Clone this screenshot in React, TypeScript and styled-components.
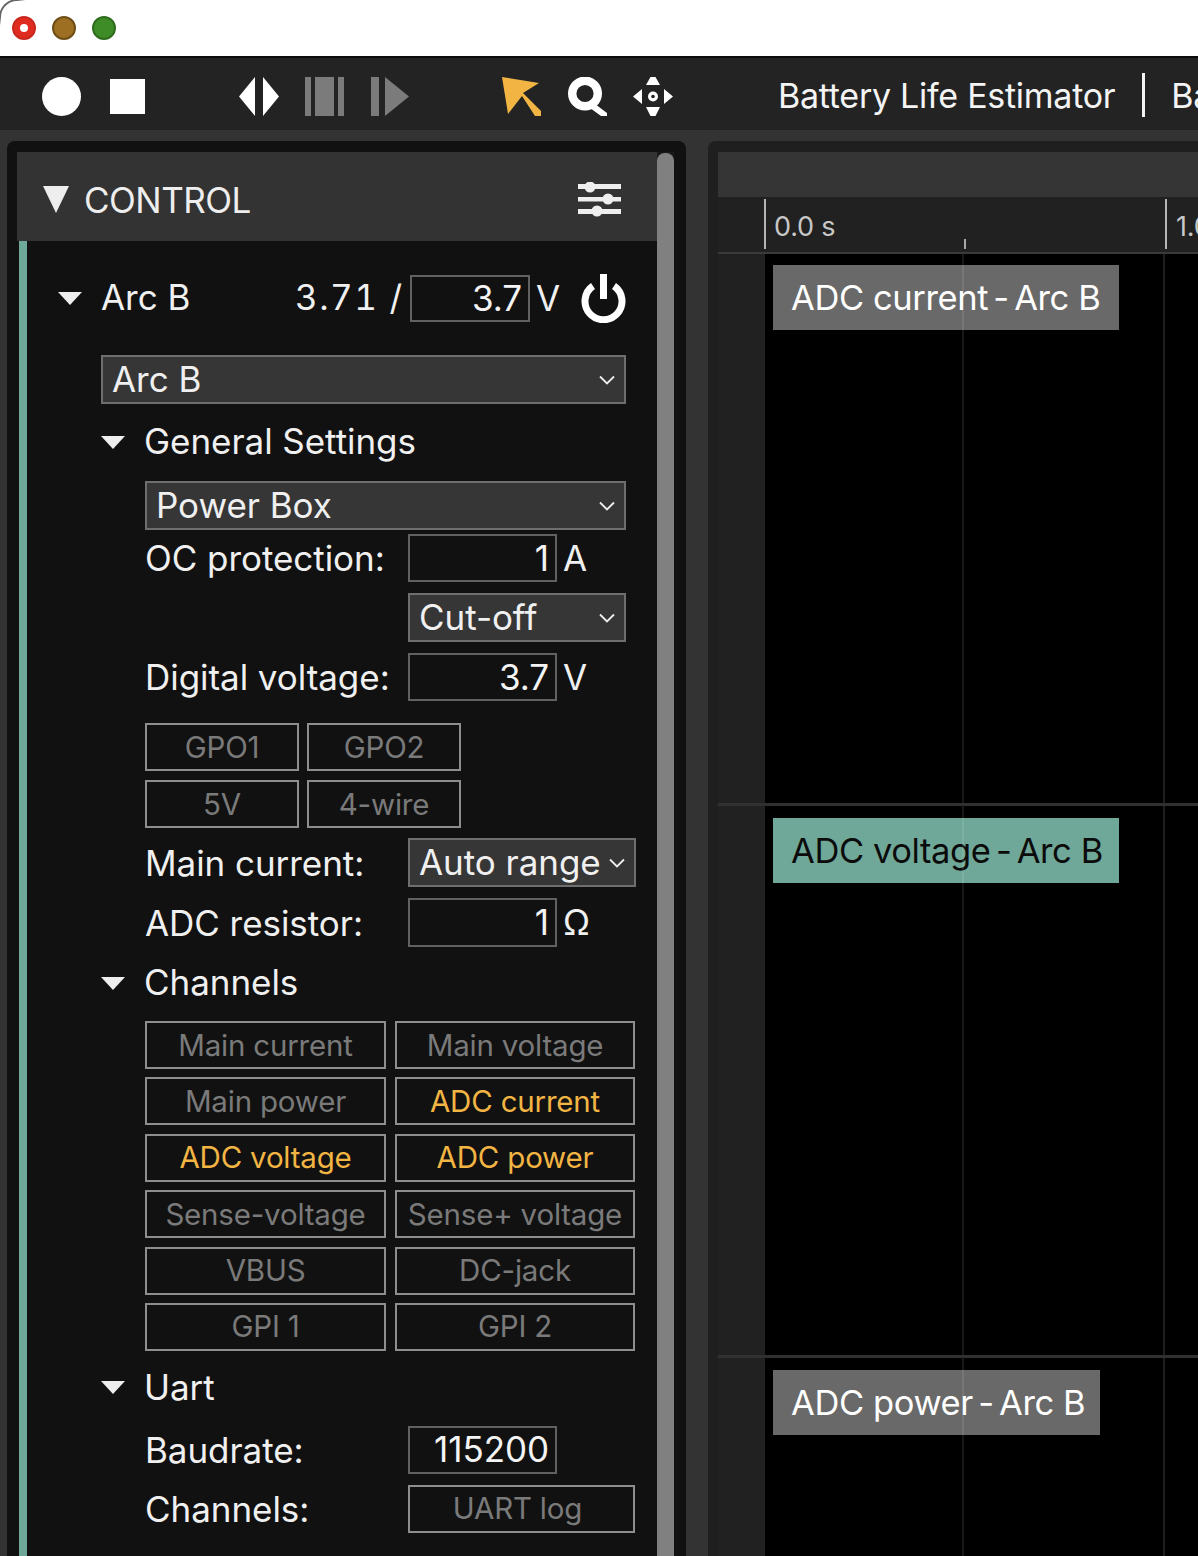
import React from "react";
import styled, { createGlobalStyle } from "styled-components";

const Global = createGlobalStyle`
  html, body { margin: 0; padding: 0; background: #333; }
  body { width: 1198px; height: 1556px; overflow: hidden; font-family: Inter, Roboto, "Liberation Sans", sans-serif; }
  * { box-sizing: border-box; }
`;

const Page = styled.div`
  width: 1198px;
  height: 1556px;
  display: flex;
  flex-direction: column;
  overflow: hidden;
  background: #333;
`;

const TitleBar = styled.div`
  height: 58px;
  flex: none;
  background: #fff;
  border-bottom: 2px solid #0c0c0c;
  position: relative;
  display: flex;
  align-items: center;
  gap: 16px;
  padding: 0 0 0 12px;
  &::before {
    content: "";
    position: absolute;
    left: -1px;
    top: -1px;
    width: 26px;
    height: 26px;
    border-top-left-radius: 18px;
    border-top: 2px solid #666;
    border-left: 2px solid #666;
    mask-image: linear-gradient(135deg, #000 35%, transparent 50%);
  }
`;

const Light = styled.span<{ $fill: string; $edge: string }>`
  width: 24px;
  height: 24px;
  border-radius: 50%;
  background: ${(p) => p.$fill};
  border: 2px solid ${(p) => p.$edge};
  display: flex;
  align-items: center;
  justify-content: center;
`;

const LightDot = styled.span`
  width: 8px;
  height: 8px;
  border-radius: 50%;
  background: #fff;
`;

const Toolbar = styled.div`
  height: 72px;
  flex: none;
  background: #232323;
  display: flex;
  align-items: center;
  padding-left: 42px;
  padding-top: 4px;
  white-space: nowrap;
  overflow: hidden;
`;

const ToolIcon = styled.svg<{ $ml: number }>`
  flex: none;
  margin-left: ${(p) => p.$ml}px;
  display: block;
`;

const ToolTitle = styled.span<{ $ml: number }>`
  margin-left: ${(p) => p.$ml}px;
  margin-top: -1px;
  font-size: 34px;
  letter-spacing: -0.27px;
  color: #f4f4f4;
  flex: none;
`;

const ToolDivider = styled.span`
  width: 3px;
  height: 44px;
  margin-left: 27px;
  margin-top: -3px;
  background: #f4f4f4;
  flex: none;
`;

const Main = styled.div`
  flex: 1;
  min-height: 0;
  display: flex;
  gap: 22px;
  padding: 11px 0 0 7px;
`;

const LeftFrame = styled.div`
  width: 679px;
  flex: none;
  background: #111;
  border-radius: 8px 8px 0 0;
  padding: 11px 12px 0 10px;
  display: flex;
`;

const LeftBody = styled.div`
  flex: 1;
  min-width: 0;
  display: flex;
  flex-direction: column;
`;

const Scrollbar = styled.div`
  width: 17px;
  flex: none;
  background: #1a1a1a;
  padding-top: 1px;
`;

const ScrollThumb = styled.div`
  height: 100%;
  background: #808080;
  border-radius: 8px 8px 0 0;
`;

const PanelHead = styled.div`
  height: 89px;
  flex: none;
  background: #333;
  display: flex;
  align-items: center;
  padding: 6px 36px 0 26px;
`;

const PanelTitle = styled.span`
  font-size: 35px;
  color: #eee;
  margin-left: 15px;
  flex: 1;
  letter-spacing: -0.5px;
`;

const Control = styled.div`
  flex: 1;
  min-height: 0;
  background: #111;
  margin-left: 2px;
  border-left: 8px solid #6fa898;
  display: flex;
  flex-direction: column;
  color: #f0f0f0;
  font-size: 35px;
  letter-spacing: -0.05px;
`;

const Row = styled.div<{ $mt: number; $h: number; $indent: number }>`
  display: flex;
  align-items: center;
  flex: none;
  height: ${(p) => p.$h}px;
  margin-top: ${(p) => p.$mt}px;
  margin-left: ${(p) => p.$indent}px;
`;

const Label = styled.span<{ $w: number; $lift?: number }>`
  width: ${(p) => p.$w}px;
  flex: none;
  white-space: nowrap;
  padding-bottom: ${(p) => p.$lift ?? 0}px;
`;

const Caret = styled.svg`
  flex: none;
  width: 24px;
  height: 13px;
  margin-right: 19px;
  display: block;
`;

const Reading = styled.span`
  flex: none;
  width: 115px;
  white-space: nowrap;
  padding-bottom: 4px;
  font-variant-numeric: tabular-nums;
  letter-spacing: 1.5px;
`;

const PowerIcon = styled.svg`
  flex: none;
  margin-left: 21px;
  display: block;
`;

const NumberBox = styled.div<{ $w: number }>`
  width: ${(p) => p.$w}px;
  height: 100%;
  flex: none;
  border: 2px solid #616161;
  display: flex;
  align-items: center;
  justify-content: flex-end;
  padding: 0 6px 1px 0;
  color: #f4f4f4;
`;

const Unit = styled.span`
  margin-left: 6px;
  flex: none;
  padding-bottom: 1px;
`;

const SelectBox = styled.div<{ $w: number }>`
  width: ${(p) => p.$w}px;
  height: 100%;
  flex: none;
  background: #363636;
  border: 2px solid #6e6e6e;
  display: flex;
  align-items: center;
  padding: 0 8px 0 9px;
  color: #f0f0f0;
`;

const SelectText = styled.span`
  flex: 1;
  white-space: nowrap;
  padding-bottom: 2px;
`;

const Chevron = styled.svg`
  width: 18px;
  height: 10px;
  flex: none;
  display: block;
`;

const ButtonGrid = styled.div<{ $mt: number; $cols: string; $gap: number; $rowGap: number }>`
  display: grid;
  grid-template-columns: ${(p) => p.$cols};
  column-gap: ${(p) => p.$gap}px;
  row-gap: ${(p) => p.$rowGap}px;
  grid-auto-rows: 48px;
  margin-top: ${(p) => p.$mt}px;
  margin-left: 118px;
  flex: none;
`;

const Toggle = styled.div<{ $on?: boolean }>`
  border: 2px solid #8e8e8e;
  display: flex;
  align-items: center;
  justify-content: center;
  padding-bottom: 1px;
  font-size: 29.5px;
  letter-spacing: -0.2px;
  white-space: nowrap;
  color: ${(p) => (p.$on ? "#f2b544" : "#7a7a7a")};
  height: 100%;
`;

const WideToggle = styled(Toggle)`
  width: 227px;
  flex: none;
  padding-right: 8px;
`;

const RightFrame = styled.div`
  flex: 1;
  min-width: 0;
  background: #1f1f1f;
  border-radius: 8px 0 0 0;
  padding: 11px 0 0 10px;
  display: flex;
  flex-direction: column;
`;

const TimelineHead = styled.div`
  height: 45px;
  background: #353535;
  flex: none;
`;

const Ruler = styled.div`
  height: 57px;
  flex: none;
  background: #212121;
  border-bottom: 2px solid #3a3a3a;
  position: relative;
  overflow: hidden;
`;

const RulerTick = styled.span<{ $x: number; $top: number; $strong?: boolean }>`
  position: absolute;
  left: ${(p) => p.$x}px;
  top: ${(p) => p.$top}px;
  bottom: 3px;
  width: 2px;
  background: ${(p) => (p.$strong ? "#b5b5b5" : "#a8a8a8")};
`;

const RulerText = styled.span<{ $x: number }>`
  position: absolute;
  left: ${(p) => p.$x}px;
  top: 13px;
  font-size: 27px;
  letter-spacing: -0.2px;
  color: #c8c8c8;
  white-space: nowrap;
`;

const Track = styled.div<{ $h: number; $line?: boolean }>`
  height: ${(p) => p.$h}px;
  flex: none;
  display: flex;
  border-bottom: ${(p) => (p.$line ? "3px solid #303030" : "none")};
`;

const Gutter = styled.div`
  width: 47px;
  flex: none;
  background: #212121;
`;

const TrackBody = styled.div<{ $pt: number }>`
  flex: 1;
  background: #000;
  position: relative;
  padding: ${(p) => p.$pt}px 0 0 8px;
  &::after {
    content: "";
    position: absolute;
    inset: 0;
    pointer-events: none;
    background:
      linear-gradient(rgba(255,255,255,.09), rgba(255,255,255,.09)) 197px 0 / 2px 100% no-repeat,
      linear-gradient(rgba(255,255,255,.12), rgba(255,255,255,.12)) 398px 0 / 2px 100% no-repeat;
  }
`;

const TrackLabel = styled.div<{ $bg: string; $fg: string; $w: number }>`
  width: ${(p) => p.$w}px;
  height: 65px;
  background: ${(p) => p.$bg};
  color: ${(p) => p.$fg};
  font-size: 34.5px;
  letter-spacing: -0.4px;
  line-height: 66px;
  padding-left: 18px;
  white-space: pre;
`;

const TightSpan = styled.span`
  word-spacing: -4px;
`;

const caret = (
  <Caret viewBox="0 0 24 13"><path d="M0 0H24L12 13Z" fill="#eee" /></Caret>
);
const chev = (
  <Chevron viewBox="0 0 18 10"><path d="M2 1.5L9 8.5L16 1.5" fill="none" stroke="#eee" strokeWidth="1.8" /></Chevron>
);

const channelButtons: [string, boolean][] = [
  ["Main current", false], ["Main voltage", false],
  ["Main power", false], ["ADC current", true],
  ["ADC voltage", true], ["ADC power", true],
  ["Sense-voltage", false], ["Sense+ voltage", false],
  ["VBUS", false], ["DC-jack", false],
  ["GPI 1", false], ["GPI 2", false],
];

export default function App() {
  return (
    <Page>
      <Global />
      <TitleBar>
        <Light $fill="#e02b20" $edge="#c9281d"><LightDot /></Light>
        <Light $fill="#9c6f22" $edge="#6f4e18" />
        <Light $fill="#3e8c28" $edge="#2f6c1f" />
      </TitleBar>
      <Toolbar>
        <ToolIcon $ml={0} width="39" height="39" viewBox="0 0 39 39"><circle cx="19.5" cy="19.5" r="19.5" fill="#fff" /></ToolIcon>
        <ToolIcon $ml={29} width="35" height="35" viewBox="0 0 35 35"><rect width="35" height="35" fill="#fff" /></ToolIcon>
        <ToolIcon $ml={94} width="40" height="39" viewBox="0 0 40 39"><path d="M16 0V39L0 19.5ZM24 0V39L40 19.5Z" fill="#fff" /></ToolIcon>
        <ToolIcon $ml={26} width="39" height="39" viewBox="0 0 39 39"><path d="M0 0H6V39H0ZM10 0H29V39H10ZM33 0H39V39H33Z" fill="#7b7b7b" /></ToolIcon>
        <ToolIcon $ml={27} width="38" height="39" viewBox="0 0 38 39"><path d="M0 0H8V39H0ZM14 0L38 19.5L14 39Z" fill="#7b7b7b" /></ToolIcon>
        <ToolIcon $ml={92} width="41" height="39" viewBox="0 0 41 39"><path d="M1 0L38 6L22 16L40 34V39H34L21 19L7 37Z" fill="#f2b544" /></ToolIcon>
        <ToolIcon $ml={26} width="39" height="39" viewBox="0 0 39 39"><circle cx="17" cy="16.5" r="12.8" fill="none" stroke="#fff" strokeWidth="8.4" /><path d="M27 27L39 36V39H33L22 31Z" fill="#fff" /></ToolIcon>
        <ToolIcon $ml={26} width="40" height="39" viewBox="0 0 40 39"><path d="M17.5 0H22.5L27 8H13ZM17.5 39H22.5L27 30H13ZM0 19.5L9 12V27ZM40 19.5L31 12V27Z" fill="#fff" /><circle cx="20" cy="19.5" r="5" fill="#fff" /><circle cx="20" cy="19.5" r="1.8" fill="#232323" /></ToolIcon>
        <ToolTitle $ml={105}>Battery Life Estimator</ToolTitle>
        <ToolDivider />
        <ToolTitle $ml={26}>Battery</ToolTitle>
      </Toolbar>
      <Main>
        <LeftFrame>
          <LeftBody>
            <PanelHead>
              <svg width="26" height="27" viewBox="0 0 26 27"><path d="M0 0H26L13 27Z" fill="#eee" /></svg>
              <PanelTitle>CONTROL</PanelTitle>
              <svg width="43" height="35" viewBox="0 0 43 35">
                <path d="M0 2H43V7H0ZM0 15H43V19.5H0ZM0 27H43V32H0Z" fill="#eee" />
                <circle cx="12" cy="5" r="5.5" fill="#eee" /><circle cx="30" cy="17" r="5.5" fill="#eee" /><circle cx="19" cy="29" r="5.5" fill="#eee" />
              </svg>
            </PanelHead>
            <Control>
              <Row $mt={34} $h={47} $indent={31}>
                {caret}
                <Label $w={194} $lift={4}>Arc B</Label>
                <Reading>3.71 /</Reading>
                <NumberBox $w={120}>3.7</NumberBox>
                <Unit>V</Unit>
                <PowerIcon width="45" height="49" viewBox="0 0 45 49">
                  <path d="M12 12A18.5 18.5 0 1 0 33 12" fill="none" stroke="#fff" strokeWidth="7" />
                  <path d="M22.5 0V25" stroke="#fff" strokeWidth="7" />
                </PowerIcon>
              </Row>
              <Row $mt={33} $h={49} $indent={74}>
                <SelectBox $w={525}><SelectText>Arc B</SelectText>{chev}</SelectBox>
              </Row>
              <Row $mt={18} $h={40} $indent={74}>{caret}<Label $w={300} $lift={2}>General Settings</Label></Row>
              <Row $mt={19} $h={49} $indent={118}>
                <SelectBox $w={481}><SelectText>Power Box</SelectText>{chev}</SelectBox>
              </Row>
              <Row $mt={4} $h={48} $indent={118}>
                <Label $w={263}>OC protection:</Label>
                <NumberBox $w={149}>1</NumberBox><Unit>A</Unit>
              </Row>
              <Row $mt={11} $h={49} $indent={381}>
                <SelectBox $w={218}><SelectText>Cut-off</SelectText>{chev}</SelectBox>
              </Row>
              <Row $mt={11} $h={48} $indent={118}>
                <Label $w={263}>Digital voltage:</Label>
                <NumberBox $w={149}>3.7</NumberBox><Unit>V</Unit>
              </Row>
              <ButtonGrid $mt={22} $cols="154px 154px" $gap={8} $rowGap={9}>
                <Toggle>GPO1</Toggle><Toggle>GPO2</Toggle>
                <Toggle>5V</Toggle><Toggle>4-wire</Toggle>
              </ButtonGrid>
              <Row $mt={10} $h={49} $indent={118}>
                <Label $w={263}>Main current:</Label>
                <SelectBox $w={228}><SelectText>Auto range</SelectText>{chev}</SelectBox>
              </Row>
              <Row $mt={11} $h={49} $indent={118}>
                <Label $w={263}>ADC resistor:</Label>
                <NumberBox $w={149}>1</NumberBox><Unit>Ω</Unit>
              </Row>
              <Row $mt={16} $h={40} $indent={74}>{caret}<Label $w={300} $lift={2}>Channels</Label></Row>
              <ButtonGrid $mt={18} $cols="241px 240px" $gap={9} $rowGap={8.4}>
                {channelButtons.map(([t, on]) => <Toggle key={t} $on={on}>{t}</Toggle>)}
              </ButtonGrid>
              <Row $mt={17} $h={40} $indent={74}>{caret}<Label $w={300} $lift={2}>Uart</Label></Row>
              <Row $mt={18} $h={48} $indent={118}>
                <Label $w={263}>Baudrate:</Label>
                <NumberBox $w={149}>115200</NumberBox>
              </Row>
              <Row $mt={11} $h={48} $indent={118}>
                <Label $w={263}>Channels:</Label>
                <WideToggle>UART log</WideToggle>
              </Row>
            </Control>
          </LeftBody>
          <Scrollbar><ScrollThumb /></Scrollbar>
        </LeftFrame>
        <RightFrame>
          <TimelineHead />
          <Ruler>
            <RulerTick $x={46} $top={2} $strong />
            <RulerText $x={56}>0.0 s</RulerText>
            <RulerTick $x={246} $top={42} />
            <RulerTick $x={447} $top={2} $strong />
            <RulerText $x={458}>1.0 s</RulerText>
          </Ruler>
          <Track $h={552} $line>
            <Gutter />
            <TrackBody $pt={11}><TrackLabel $bg="#696969" $fg="#fff" $w={346}>ADC current<TightSpan> - </TightSpan>Arc B</TrackLabel></TrackBody>
          </Track>
          <Track $h={552} $line>
            <Gutter />
            <TrackBody $pt={12}><TrackLabel $bg="#6fa898" $fg="#0b0b0b" $w={346}>ADC voltage<TightSpan> - </TightSpan>Arc B</TrackLabel></TrackBody>
          </Track>
          <Track $h={300}>
            <Gutter />
            <TrackBody $pt={12}><TrackLabel $bg="#696969" $fg="#fff" $w={327}>ADC power<TightSpan> - </TightSpan>Arc B</TrackLabel></TrackBody>
          </Track>
        </RightFrame>
      </Main>
    </Page>
  );
}
